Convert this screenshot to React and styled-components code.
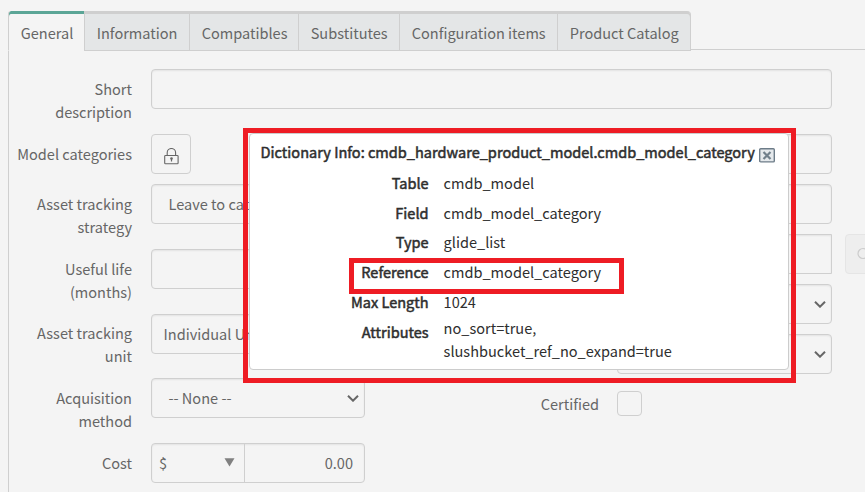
import React from "react";
import styled, { createGlobalStyle } from "styled-components";

const Global = createGlobalStyle`
  * { box-sizing: border-box; }
  body {
    margin: 0;
    background: #f4f4f4;
    overflow: hidden;
  }
  svg { display: block; }
`;

const Page = styled.main`
  position: relative;
  width: 865px;
  height: 492px;
  overflow: hidden;
  padding: 11px 0 0 8px;
  background: #f4f4f4;
  color: #666;
  font: 400 14.55px/23px "Noto Sans CJK SC", "Source Sans Pro", sans-serif;
  white-space: nowrap;
`;

const TabBar = styled.nav`
  display: flex;
  height: 40px;
`;

const Tab = styled.div`
  width: ${(p) => p.$w}px;
  height: 40px;
  padding: 10px 0 0 11.7px;
  border-left: 1px solid #cfcfcf;
  border-bottom: 1px solid ${(p) => (p.$active ? "transparent" : "#cfcfcf")};
  background: ${(p) => (p.$active ? "#f4f4f4" : "#e4e6e7")};
  background-clip: padding-box;
  box-shadow: inset 0 3px ${(p) => (p.$active ? "#5ba596" : "#cfcfcf")};
  &:first-child { border-top-left-radius: 3px; }
  &:nth-child(6) {
    border-right: 1px solid #cfcfcf;
    border-top-right-radius: 4px;
  }
`;

const TabRule = styled.div`
  flex: 1;
  height: 39px;
  border-bottom: 1px solid #cfcfcf;
`;

const Panel = styled.section`
  height: 441px;
  padding-top: 18px;
  border-left: 1px solid #cfcfcf;
`;

const Columns = styled.div`
  display: grid;
  grid-template-columns: 356px 467px;
`;

const Row = styled.div`
  display: grid;
  grid-template-columns: ${(p) => (p.$right ? "234px 215px auto" : p.$wide ? "123px 681px" : "123px 214px")};
  column-gap: ${(p) => (p.$right ? 18 : 19)}px;
  height: ${(p) => p.$h}px;
`;

const Label = styled.label`
  padding-top: ${(p) => p.$top || 8}px;
  text-align: right;
  white-space: pre-line;
`;

const Field = styled.div`
  display: flex;
  align-items: center;
  justify-content: space-between;
  height: 40px;
  padding: 0 5px ${(p) => p.$lift || 0}px ${(p) => p.$pad || 16.5}px;
  border: 1px solid #cfcfcf;
  border-radius: ${(p) => (p.$square ? "3px 0 0 3px" : "4px")};
  box-shadow: inset 0 1px 2px rgba(0, 0, 0, 0.07);
`;

const LockButton = styled.div`
  display: grid;
  place-items: center;
  width: 40px;
  height: 40px;
  padding: 4px 0 0 1px;
  border: 1px solid #cfcfcf;
  border-radius: 4px;
`;

const SearchButton = styled.div`
  width: 40px;
  height: 40px;
  margin-left: -5px;
  padding: 12px 0 0 11px;
  border: 1px solid #e5e5e5;
  border-radius: 4px;
  background: #eee;
`;

const Money = styled.div`
  display: grid;
  grid-template-columns: 93px 1fr;
  height: 40px;
  border: 1px solid #cfcfcf;
  border-radius: 4px;
  box-shadow: inset 0 1px 2px rgba(0, 0, 0, 0.07);
`;

const Currency = styled.div`
  display: flex;
  align-items: center;
  justify-content: space-between;
  padding: 0 9px 2px 7px;
  border-right: 1px solid #cfcfcf;
`;

const Amount = styled.div`
  padding: 7px 11px 0 0;
  text-align: right;
`;

const Checkbox = styled.div`
  width: 25px;
  height: 25px;
  margin-top: 7px;
  border: 1px solid #cfcfcf;
  border-radius: 4px;
`;

const Popup = styled.aside`
  position: absolute;
  left: 249px;
  top: 133px;
  width: 540px;
  height: 237px;
  padding: 6px 0 0 10.6px;
  border: 1px solid #ccc;
  border-radius: 4px;
  background: #fff;
  color: #2e2e2e;
`;

const PopupTitle = styled.header`
  display: flex;
  height: 31px;
  gap: 4px;
  -webkit-text-stroke: 0.5px #2e2e2e;
  svg { margin-top: 8px; }
`;

const Entry = styled.div`
  display: grid;
  grid-template-columns: 168px auto;
  column-gap: 15px;
  height: ${(p) => p.$h || 30}px;
`;

const Key = styled.b`
  padding-top: ${(p) => p.$drop || 0}px;
  font-weight: 400;
  text-align: right;
  -webkit-text-stroke: 0.5px #2e2e2e;
`;

const Value = styled.span`
  white-space: pre-line;
`;

const Highlight = styled.div`
  position: absolute;
  left: ${(p) => p.$x}px;
  top: ${(p) => p.$y}px;
  width: ${(p) => p.$w}px;
  height: ${(p) => p.$h}px;
  border: 5px solid #ee1c24;
`;

const Chevron = () => (
  <svg width="12" height="8" viewBox="0 0 12 8" fill="none" stroke="#666" strokeWidth="2">
    <path d="M1 1.7 6 6.7 11 1.7" />
  </svg>
);

const Lock = () => (
  <svg width="16" height="17" viewBox="0 0 16 17" fill="none" stroke="#666" strokeWidth="1.1">
    <path d="M3.2 7.5V4.7a4.2 4.2 0 0 1 8.4 0V7.5" />
    <rect x="0.7" y="7.5" width="13.4" height="8.2" rx="0.8" />
    <circle cx="7.5" cy="10.5" r="1.3" fill="#666" stroke="none" />
    <path d="M7.5 10.5v3" strokeWidth="1.2" />
  </svg>
);

const Close = () => (
  <svg width="16" height="15" viewBox="0 0 16 15" fill="none">
    <rect x="0.7" y="0.7" width="14.6" height="13.2" rx="1" fill="#e5e9ec" stroke="#6d7c88" strokeWidth="1.4" />
    <path d="M4.5 4 11.5 11M11.5 4 4.5 11" stroke="#71808b" strokeWidth="2.2" />
  </svg>
);

const tabs = [
  ["General", 76],
  ["Information", 105],
  ["Compatibles", 109],
  ["Substitutes", 101],
  ["Configuration items", 158],
  ["Product Catalog", 134],
];

const entries = [
  ["Table", "cmdb_model", 30],
  ["Field", "cmdb_model_category", 29],
  ["Type", "glide_list", 30],
  ["Reference", "cmdb_model_category", 30],
  ["Max Length", "1024", 26],
  ["Attributes", "no_sort=true,\nslushbucket_ref_no_expand=true", 46],
];

export default function App() {
  return (
    <Page>
      <Global />
      <TabBar>
        {tabs.map(([name, w], i) => (
          <Tab key={name} $w={w} $active={i === 0}>{name}</Tab>
        ))}
        <TabRule />
      </TabBar>
      <Panel>
        <Row $wide $h={65}>
          <Label>{"Short\ndescription"}</Label>
          <Field />
        </Row>
        <Columns>
          <div>
            <Row $h={50}>
              <Label>Model categories</Label>
              <LockButton><Lock /></LockButton>
            </Row>
            <Row $h={65}>
              <Label>{"Asset tracking\nstrategy"}</Label>
              <Field $lift={2}>Leave to category</Field>
            </Row>
            <Row $h={65}>
              <Label>{"Useful life\n(months)"}</Label>
              <Field />
            </Row>
            <Row $h={64}>
              <Label $top={7}>{"Asset tracking\nunit"}</Label>
              <Field $pad={11.5} $lift={2}>Individual Units</Field>
            </Row>
            <Row $h={65}>
              <Label>{"Acquisition\nmethod"}</Label>
              <Field $lift={1}>-- None --<Chevron /></Field>
            </Row>
            <Row $h={49}>
              <Label>Cost</Label>
              <Money>
                <Currency>
                  $
                  <svg width="11" height="9" viewBox="0 0 11 9"><path d="M.5.3h10L5.5 8.5z" fill="#808080" /></svg>
                </Currency>
                <Amount>0.00</Amount>
              </Money>
            </Row>
          </div>
          <div>
            <Row $right $h={50}><span /><Field /></Row>
            <Row $right $h={50}><span /><Field /></Row>
            <Row $right $h={50}>
              <span />
              <Field $square />
              <SearchButton>
                <svg width="16" height="16" viewBox="0 0 16 16" fill="none" stroke="#ccc" strokeWidth="1.2">
                  <circle cx="6" cy="6.5" r="5" /><path d="m9.5 10 5 5" />
                </svg>
              </SearchButton>
            </Row>
            <Row $right $h={50}><span /><Field><span /><Chevron /></Field></Row>
            <Row $right $h={50}><span /><Field><span /><Chevron /></Field></Row>
            <Row $right $h={50}><Label>Certified</Label><Checkbox /></Row>
          </div>
        </Columns>
      </Panel>
      <Popup>
        <PopupTitle>
          <span>Dictionary Info: cmdb_hardware_product_model.cmdb_model_category</span>
          <Close />
        </PopupTitle>
        {entries.map(([key, value, h]) => (
          <Entry key={key} $h={h}>
            <Key $drop={key === "Attributes" ? 4 : 0}>{key}</Key>
            <Value>{value}</Value>
          </Entry>
        ))}
      </Popup>
      <Highlight $x={243} $y={128} $w={553} $h={255} />
      <Highlight $x={349} $y={258} $w={275} $h={36} />
    </Page>
  );
}
